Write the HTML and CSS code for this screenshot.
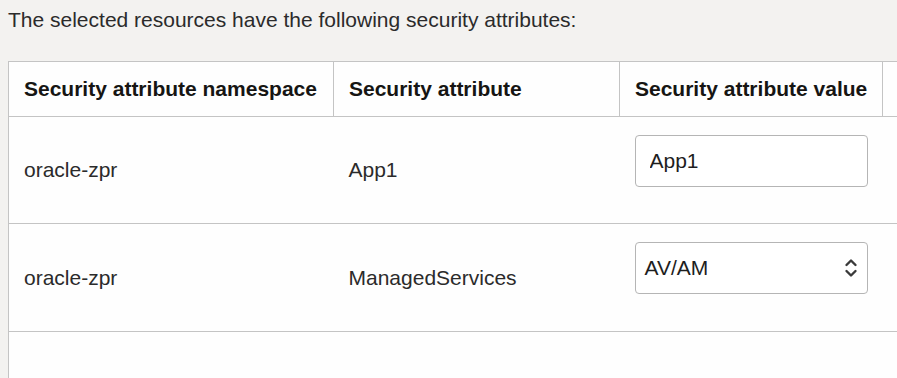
FILE: index.html
```html
<!DOCTYPE html>
<html lang="en">
<head>
  <meta charset="UTF-8">
  <meta name="viewport" content="width=device-width, initial-scale=1.0">
  <title>Security attributes</title>
  <link rel="stylesheet" href="styles.css">
</head>
<body>
  <p class="intro">The selected resources have the following security attributes:</p>

  <div class="tabla-wrap">
    <table class="tabla">
      <colgroup>
        <col class="col-ns">
        <col class="col-attr">
        <col class="col-val">
        <col class="col-extra">
      </colgroup>
      <thead>
        <tr>
          <th>Security attribute namespace</th>
          <th>Security attribute</th>
          <th>Security attribute value</th>
          <th></th>
        </tr>
      </thead>
      <tbody>
        <tr>
          <td>oracle-zpr</td>
          <td>App1</td>
          <td class="celda-campo"><input class="campo" type="text" value="App1"></td>
          <td></td>
        </tr>
        <tr>
          <td>oracle-zpr</td>
          <td>ManagedServices</td>
          <td class="celda-campo">
            <div class="selector">
              <span>AV/AM</span>
              <svg class="chevron" width="16" height="24" viewBox="0 0 16 24">
                <path d="M3.5 9 L8 4.5 L12.5 9" fill="none" stroke="#3a3a3a" stroke-width="2.4" stroke-linecap="round" stroke-linejoin="round"/>
                <path d="M3.5 15 L8 19.5 L12.5 15" fill="none" stroke="#3a3a3a" stroke-width="2.4" stroke-linecap="round" stroke-linejoin="round"/>
              </svg>
            </div>
          </td>
          <td></td>
        </tr>
        <tr class="vacia">
          <td></td>
          <td></td>
          <td></td>
          <td></td>
        </tr>
      </tbody>
    </table>
  </div>
</body>
</html>
```

FILE: styles.css
```css
body {
  font-family: Arial, "Liberation Sans", sans-serif;
  margin: 0;
  padding: 0;
  background-color: #f3f2f0;
  color: #2b2b2b;
  overflow: hidden;
}
.intro {
  margin: 0;
  padding: 8px 8px 0;
  font-size: 21px;
  line-height: 24px;
}
.tabla-wrap {
  margin: 29px 0 0 8px;
}
.tabla {
  border-collapse: collapse;
  background-color: #fefefe;
  table-layout: fixed;
  width: 1073px;
  font-size: 21px;
  border-left: 1px solid #c4c4c4;
}
.col-ns { width: 325px; }
.col-attr { width: 286px; }
.col-val { width: 263px; }
.col-extra { width: 199px; }
.tabla th,
.tabla td {
  text-align: left;
  padding: 0 15px;
  white-space: nowrap;
}
.tabla th {
  height: 54px;
  font-weight: bold;
  color: #161513;
  border: 1px solid #c4c4c4;
}
.tabla td {
  height: 106px;
  border-bottom: 1px solid #c4c4c4;
}
.tabla tbody tr:nth-child(2) td {
  height: 107px;
}
.tabla td.celda-campo {
  vertical-align: top;
}
.campo,
.selector {
  box-sizing: border-box;
  width: 233px;
  height: 52px;
  margin-top: 18px;
  border: 1px solid #b5b5b5;
  border-radius: 4px;
  background-color: #fff;
  font-family: inherit;
  font-size: 21px;
  color: #1e1e1e;
}
.campo {
  display: block;
  padding: 0 0 0 14px;
}
.selector {
  display: flex;
  align-items: center;
  justify-content: space-between;
  padding: 0 8px 0 9px;
}
```
